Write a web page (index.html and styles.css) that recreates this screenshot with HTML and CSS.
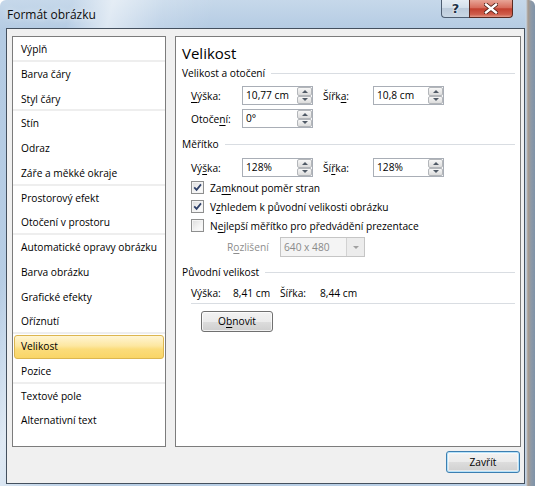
FILE: index.html
```html
<!DOCTYPE html>
<html lang="cs">
<head>
<meta charset="utf-8">
<title>Formát obrázku</title>
<link rel="stylesheet" href="styles.css">
</head>
<body>
<div class="window">
  <div class="titlebar">
    <div class="title">Formát obrázku</div>
    <div class="caption-btns">
      <div class="cbtn help">?</div>
      <div class="cbtn close">
        <svg width="14" height="11" viewBox="0 0 14 11"><path d="M2 1.5 L12 9.5 M12 1.5 L2 9.5" stroke="#4a1a12" stroke-width="4" stroke-linecap="square"/><path d="M2 1.5 L12 9.5 M12 1.5 L2 9.5" stroke="#ffffff" stroke-width="2.4" stroke-linecap="square"/></svg>
      </div>
    </div>
  </div>
  <div class="client">
    <div class="main">
      <ul class="list">
        <li class="item sep">Výplň</li>
        <li class="item">Barva čáry</li>
        <li class="item sep">Styl čáry</li>
        <li class="item">Stín</li>
        <li class="item">Odraz</li>
        <li class="item sep">Záře a měkké okraje</li>
        <li class="item">Prostorový efekt</li>
        <li class="item sep">Otočení v prostoru</li>
        <li class="item">Automatické opravy obrázku</li>
        <li class="item">Barva obrázku</li>
        <li class="item">Grafické efekty</li>
        <li class="item sep">Oříznutí</li>
        <li class="item sel">Velikost</li>
        <li class="item sep">Pozice</li>
        <li class="item">Textové pole</li>
        <li class="item">Alternativní text</li>
      </ul>
      <div class="panel">
        <div class="heading">Velikost</div>
        <div class="section"><span>Velikost a otočení</span><i class="rule"></i></div>
        <div class="row r1">
          <span class="lbl"><u>V</u>ýška:</span>
          <div class="spin"><span class="val">10,77 cm</span><div class="spinbtns"><b class="up"></b><b class="dn"></b></div></div>
          <span class="lbl2">Šířk<u>a</u>:</span>
          <div class="spin"><span class="val">10,8 cm</span><div class="spinbtns"><b class="up"></b><b class="dn"></b></div></div>
        </div>
        <div class="row r2">
          <span class="lbl">Otoče<u>n</u>í:</span>
          <div class="spin"><span class="val">0°</span><div class="spinbtns"><b class="up"></b><b class="dn"></b></div></div>
        </div>
        <div class="section s2"><span>Měřítko</span><i class="rule"></i></div>
        <div class="row r3">
          <span class="lbl">Vý<u>š</u>ka:</span>
          <div class="spin"><span class="val">128%</span><div class="spinbtns"><b class="up"></b><b class="dn"></b></div></div>
          <span class="lbl2">Ší<u>ř</u>ka:</span>
          <div class="spin"><span class="val">128%</span><div class="spinbtns"><b class="up"></b><b class="dn"></b></div></div>
        </div>
        <div class="check first">
          <span class="box"><svg width="9" height="9" viewBox="0 0 9 9"><path d="M1.2 4.3 L3.6 6.9 L8 1.4" stroke="#2f4169" stroke-width="1.7" fill="none"/></svg></span>
          <span>Za<u>m</u>knout poměr stran</span>
        </div>
        <div class="check">
          <span class="box"><svg width="9" height="9" viewBox="0 0 9 9"><path d="M1.2 4.3 L3.6 6.9 L8 1.4" stroke="#2f4169" stroke-width="1.7" fill="none"/></svg></span>
          <span>V<u>z</u>hledem k původní velikosti obrázku</span>
        </div>
        <div class="check">
          <span class="box"></span>
          <span>N<u>e</u>jlepší měřítko pro předvádění prezentace</span>
        </div>
        <div class="row rz">
          <span class="lblz">R<u>o</u>zlišení</span>
          <div class="combo"><span class="cval">640 x 480</span><span class="cbtn-dd"><i></i></span></div>
        </div>
        <div class="section s3"><span>Původní velikost</span><i class="rule"></i></div>
        <div class="info">
          <span class="i1">Výška:</span><span class="i2">8,41 cm</span><span class="i3">Šířka:</span><span>8,44 cm</span>
        </div>
        <button class="btn reset" type="button">O<u>b</u>novit</button>
      </div>
    </div>
    <div class="footer">
      <button class="btn default" type="button">Zavřít</button>
    </div>
  </div>
</div>
</body>
</html>
```

FILE: styles.css
```css
html, body {
  margin: 0;
  padding: 0;
}
body {
  width: 535px;
  height: 486px;
  overflow: hidden;
  background: #ffffff;
  font-family: "Open Sans", "Noto Sans", "DejaVu Sans", sans-serif;
  font-size: 10.2px;
  color: #000;
}
u { text-decoration: underline; text-underline-offset: 2px; }

.window {
  width: 535px;
  height: 486px;
  box-sizing: border-box;
  padding: 0 10px 2px 6px;
  display: flex;
  flex-direction: column;
  border-radius: 6px 6px 0 0;
  background:
    linear-gradient(to right, transparent 525px, #c8d7e6 526px, #a89a8e 528px, #8e9aa8 531px, #7f93a8 535px),
    linear-gradient(104deg, rgba(255,255,255,0) 70px, rgba(255,255,255,0.55) 110px, rgba(255,255,255,0.15) 160px, rgba(255,255,255,0) 210px),
    linear-gradient(180deg, #c6d8ea 0, #b4cbe3 30px, #b9cfe6 100%);
}

.titlebar {
  height: 28px;
  display: flex;
  align-items: flex-start;
}
.title {
  padding-left: 1px;
  line-height: 30px;
  font-size: 12px;
  color: #0c0c0c;
  text-shadow: 0 0 6px rgba(255,255,255,0.9);
}
.caption-btns {
  margin-left: auto;
  margin-right: 12px;
  display: flex;
}
.cbtn {
  height: 18px;
  box-sizing: border-box;
  display: flex;
  align-items: center;
  justify-content: center;
  border: 1px solid #4e5e72;
  border-top: 0;
}
.help {
  width: 28px;
  border-radius: 0 0 0 4px;
  border-right: 0;
  background: linear-gradient(180deg, #e4ecf4 0, #d3dfeb 45%, #bccbdb 50%, #c9d7e5 100%);
  font-family: "DejaVu Sans", sans-serif;
  font-weight: bold;
  font-size: 13px;
  color: #203147;
  text-shadow: 0 0 2px #fff, 0 0 2px #fff;
}
.close {
  width: 44px;
  border-radius: 0 0 4px 0;
  border-color: #5a2a22;
  background: linear-gradient(180deg, #e8a597 0, #d76d5d 45%, #c2402f 52%, #cf5e4c 85%, #e39a8a 100%);
}

.client {
  flex: 1;
  border: 1px solid #44505e;
  background: #f0f0f0;
  display: flex;
  flex-direction: column;
}
.main {
  display: flex;
  padding: 7px 3px 0 5px;
  height: 411px;
}
.list {
  list-style: none;
  margin: 0;
  padding: 0;
  width: 154px;
  box-sizing: border-box;
  border: 1px solid #7c7c7c;
  background: #fff;
}
.item {
  position: relative;
  isolation: isolate;
  height: 24.75px;
  line-height: 24.75px;
  padding-left: 8px;
  white-space: nowrap;
}
.item.sep {
  box-shadow: inset 0 -2px 0 #eeeeee;
}
.item.sel {
  box-shadow: none;
}
.item.sel::before {
  content: "";
  position: absolute;
  left: 1px;
  right: 1px;
  top: 1px;
  bottom: 0;
  border: 1px solid #dcb64f;
  border-radius: 3px;
  background: linear-gradient(180deg, #fff5d3 0, #fde7a0 45%, #fbdc7b 60%, #f9d566 100%);
  z-index: -1;
}

.panel {
  margin-left: 9px;
  width: 346px;
  box-sizing: border-box;
  border: 1px solid #7c7c7c;
  background: #fff;
  padding: 5px 5px 0 6px;
  display: flex;
  flex-direction: column;
  align-items: flex-start;
}

.heading {
  font-size: 15px;
  line-height: 22px;
  height: 22px;
}
.section {
  align-self: stretch;
  display: flex;
  align-items: center;
  height: 16px;
  margin-top: 1px;
  line-height: 16px;
}
.section .rule {
  flex: 1;
  height: 0;
  border-top: 1px solid #d9dde2;
  margin-left: 6px;
  margin-top: 1px;
}
.section.s2 { margin-top: 8px; }
.section.s3 { margin-top: 7px; }

.row {
  display: flex;
  align-items: center;
  margin-left: 9px;
  height: 19px;
}
.row.r1 { margin-top: 5px; }
.row.r2 { margin-top: 4px; }
.row.r3 { margin-top: 6px; }
.lbl { width: 51px; }
.lbl2 { width: 50px; margin-left: 10px; }

.spin {
  width: 71px;
  height: 19px;
  box-sizing: border-box;
  border: 1px solid #a9aeb6;
  background: #fff;
  display: flex;
}
.val {
  flex: 1;
  padding-left: 3px;
  line-height: 17px;
}
.spinbtns {
  width: 15px;
  display: flex;
  flex-direction: column;
}
.spinbtns b {
  flex: 1;
  box-sizing: border-box;
  border: 1px solid #b3b6ba;
  border-radius: 2px;
  background: linear-gradient(180deg, #f7f7f7 0, #e9e9e9 50%, #dcdcdc 100%);
  display: flex;
  align-items: center;
  justify-content: center;
}
.spinbtns b::after {
  content: "";
  width: 0;
  height: 0;
  border-left: 3px solid transparent;
  border-right: 3px solid transparent;
}
.spinbtns .up::after { border-bottom: 3px solid #505a66; }
.spinbtns .dn::after { border-top: 3px solid #505a66; }

.check {
  display: flex;
  align-items: center;
  height: 19px;
  margin-left: 9px;
}
.check.first { margin-top: 1px; }
.box {
  width: 13px;
  height: 13px;
  box-sizing: border-box;
  border: 1px solid #8e8f8f;
  background: linear-gradient(135deg, #dcdcdc 0, #f4f4f4 60%, #ffffff 100%);
  box-shadow: inset 0 0 0 1px #f4f4f4;
  display: flex;
  align-items: center;
  justify-content: center;
  margin-right: 6px;
}
.row.rz { margin-top: 2px; height: 20px; }
.lblz {
  color: #8d8d8d;
  margin-left: 36px;
  width: 53px;
}
.combo {
  width: 85px;
  height: 20px;
  box-sizing: border-box;
  border: 1px solid #c5c5c5;
  background: #f4f4f4;
  display: flex;
}
.cval {
  flex: 1;
  color: #8a8a8a;
  padding-left: 3px;
  line-height: 18px;
}
.cbtn-dd {
  width: 17px;
  border-left: 1px solid #d2d2d2;
  background: #ececec;
  display: flex;
  align-items: center;
  justify-content: center;
}
.cbtn-dd i {
  width: 0;
  height: 0;
  border-left: 3px solid transparent;
  border-right: 3px solid transparent;
  border-top: 3px solid #a0a0a0;
}

.info {
  align-self: stretch;
  margin-left: 9px;
  margin-top: 5px;
  height: 16px;
  line-height: 16px;
  padding-bottom: 2px;
  border-bottom: 1px solid #d9dde2;
  display: flex;
}
.i1 { width: 42px; }
.i2 { width: 47px; }
.i3 { width: 40px; }

.btn {
  font-family: inherit;
  font-size: 10.2px;
  color: #000;
  padding: 0;
  box-sizing: border-box;
  border: 1px solid #707070;
  border-radius: 3px;
  background: linear-gradient(180deg, #f2f2f2 0, #ebebeb 50%, #dddddd 51%, #cfcfcf 100%);
  box-shadow: inset 0 0 0 1px rgba(255,255,255,0.7);
  line-height: 19px;
}
.reset {
  margin-top: 7px;
  margin-left: 19px;
  width: 72px;
  height: 21px;
}
.footer {
  display: flex;
  justify-content: flex-end;
  padding: 4px 4px 0 0;
}
.default {
  width: 74px;
  height: 22px;
  border-color: #3c7fb1;
  box-shadow: inset 0 0 0 1px #b6e2fa, inset 0 0 0 2px rgba(255,255,255,0.5);
}
```
